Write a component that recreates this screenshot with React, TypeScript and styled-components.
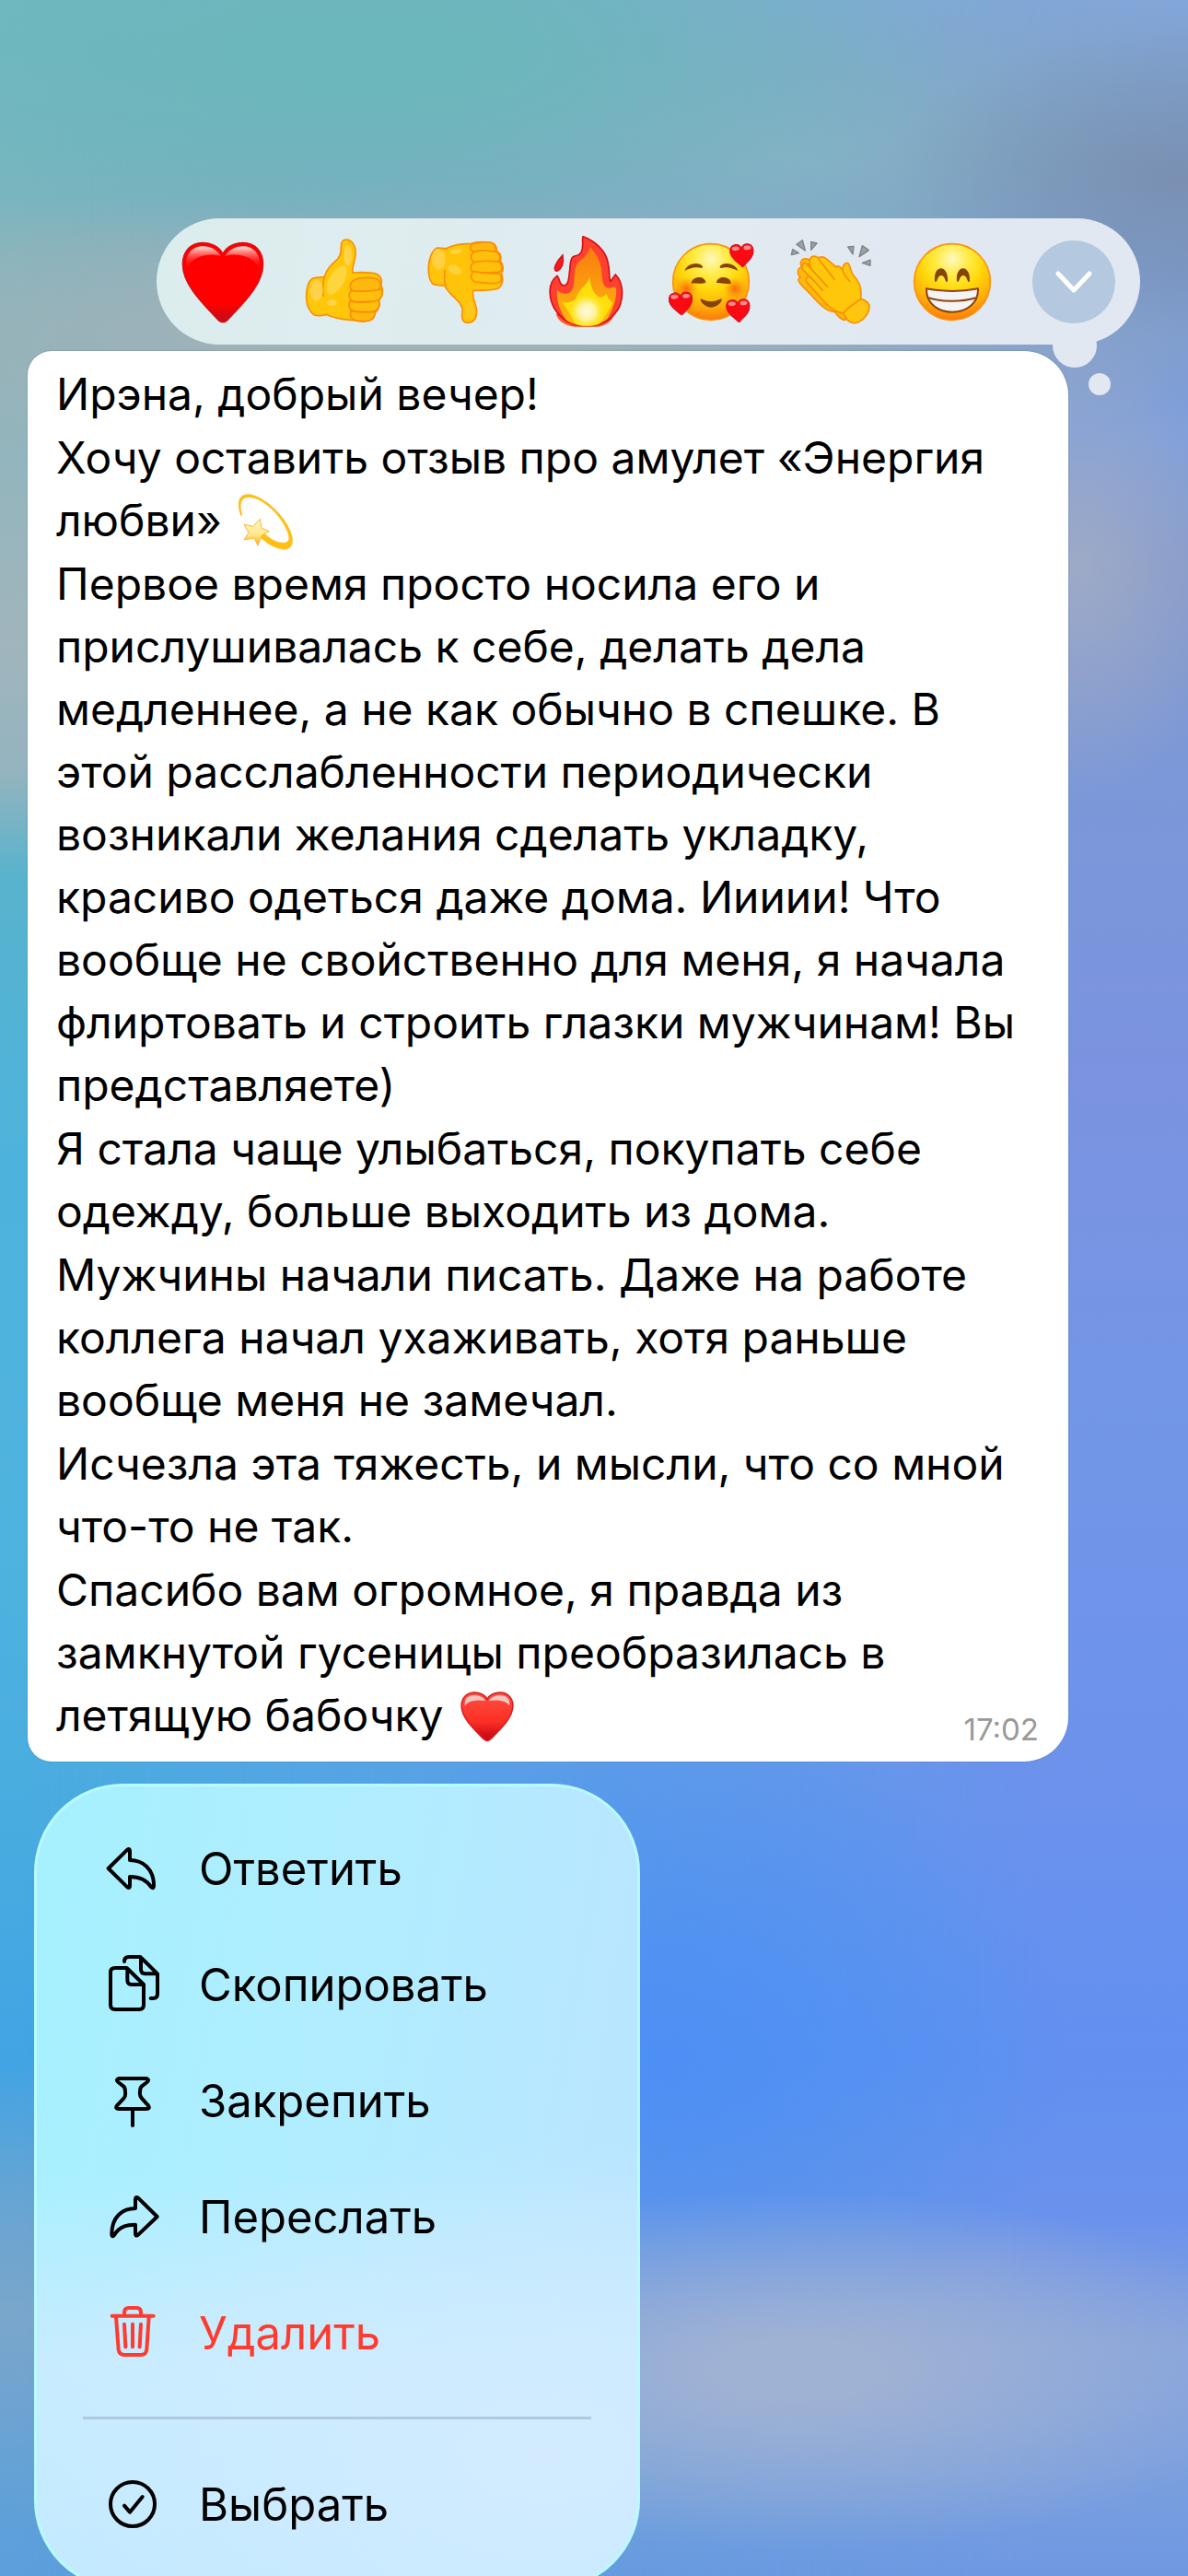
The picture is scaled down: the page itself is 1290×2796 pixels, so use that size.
import type { ReactNode } from "react";
import styled, { createGlobalStyle } from "styled-components";

const GlobalStyle = createGlobalStyle`
  * {
    box-sizing: border-box;
  }

  body {
    margin: 0;
    font-family: Inter, "Liberation Sans", sans-serif;
    color: #000000;
  }

  button {
    border: none;
    background: none;
    padding: 0;
    font: inherit;
    color: inherit;
    cursor: pointer;
  }
`;

const Screen = styled.main`
  position: relative;
  height: 100vh;
  overflow: hidden;
  display: flex;
  flex-direction: column;
  align-items: flex-start;
  padding-top: 237px;
  background: linear-gradient(
    to bottom,
    #70b8c4 0%,
    #7cb5bf 8%,
    #93b5bd 18%,
    #a0b5bd 25%,
    #94b4bf 30%,
    #58b3cd 34%,
    #4eb3dc 45%,
    #4fb3df 60%,
    #48abe0 72%,
    #42a4e4 80%,
    #6aa5d1 86%,
    #7aa6cb 90%,
    #5ea0da 98%,
    #5b9fdc 100%
  );
`;

/* Second colour column, faded in towards the right edge */
const WallpaperRight = styled.div`
  position: absolute;
  inset: 0;
  background: linear-gradient(
    to bottom,
    #82a6d8 0%,
    #7c98c4 6%,
    #7b9acf 12%,
    #7f9fdc 17%,
    #8499cc 22%,
    #7c98d8 30%,
    #7b93e0 42%,
    #7396e6 54%,
    #6d92ec 68%,
    #6290f1 80%,
    #6a92ec 86%,
    #86a3dd 91%,
    #7a9fdf 96%,
    #6f98e2 100%
  );
  mask-image: linear-gradient(to right, transparent 2%, #000000 88%);
`;

const WallpaperGlow = styled.div`
  position: absolute;
  inset: 0;
  background:
    radial-gradient(24% 6% at 99% 7%, rgba(120, 140, 174, 0.8), rgba(120, 140, 174, 0)),
    radial-gradient(50% 8% at 30% 2%, rgba(108, 183, 187, 1) 20%, rgba(108, 183, 187, 0)),
    radial-gradient(46% 7% at 66% 6%, rgba(134, 180, 198, 0.9), rgba(134, 180, 198, 0)),
    radial-gradient(13% 9% at 91% 22%, rgba(160, 172, 198, 0.9), rgba(160, 172, 198, 0)),
    radial-gradient(70% 6% at 36% 13%, rgba(160, 178, 184, 1) 20%, rgba(160, 178, 184, 0)),
    radial-gradient(42% 7% at 67% 92%, rgba(160, 178, 212, 1) 15%, rgba(160, 178, 212, 0)),
    radial-gradient(34% 14% at 56% 80%, rgba(76, 142, 245, 0.9), rgba(76, 142, 245, 0));
`;

const ReactionBar = styled.div`
  position: relative;
  z-index: 1;
  align-self: flex-end;
  flex-shrink: 0;
  display: flex;
  align-items: center;
  gap: 32px;
  height: 137px;
  margin-right: 52px;
  padding: 0 22px;
  border-radius: 69px;
  background: linear-gradient(100deg, #dcedee 0%, #e1ecf0 50%, #e1e8f1 75%, #e1e8f2 100%);
`;

const TailDot = styled.span<{ $size: number; $right: number; $top: number }>`
  position: absolute;
  top: ${(props) => props.$top}px;
  right: ${(props) => props.$right}px;
  width: ${(props) => props.$size}px;
  height: ${(props) => props.$size}px;
  border-radius: 50%;
  background: #e1e8f2;
`;

const ReactionButton = styled.button`
  width: 100px;
  height: 100px;

  svg {
    display: block;
    width: 100%;
    height: 100%;
  }
`;

const ExpandButton = styled.button`
  position: relative;
  display: flex;
  align-items: center;
  justify-content: center;
  width: 90px;
  height: 90px;
  margin: 0 5px;
  border-radius: 50%;
  background: #b4c9df;
`;

const Bubble = styled.article`
  position: relative;
  align-self: stretch;
  flex-shrink: 0;
  margin: 7px 130px 0 30px;
  padding: 13px 31px 15px;
  border-radius: 26px 48px 48px 26px;
  background: #ffffff;
  box-shadow: 0 0 2px rgba(40, 80, 120, 0.4);
`;

const Paragraph = styled.p`
  margin: 0 0 1px;
  font-size: 48px;
  line-height: 68px;
  white-space: nowrap;
`;

const Line = styled.span`
  display: block;
  height: 68px;
`;

const InlineEmoji = styled.svg`
  width: 64px;
  height: 64px;
  margin: -4px 0 -4px 2px;
  vertical-align: -12px;
`;

const Time = styled.time`
  position: absolute;
  right: 32px;
  bottom: 13px;
  font-size: 33px;
  line-height: 44px;
  color: #999999;
`;

const Menu = styled.nav`
  position: relative;
  flex-shrink: 0;
  width: 51%;
  margin: 24px 0 0 37px;
  padding: 26px 0;
  border: 3px solid #b8fbff;
  border-radius: 96px;
  background:
    radial-gradient(90% 40% at 85% 84%, rgba(212, 235, 255, 0.9), rgba(212, 235, 255, 0)),
    linear-gradient(to bottom, rgba(200, 236, 255, 0) 48%, #c8ecff 72%, #c2eaff 100%),
    linear-gradient(100deg, #a6f1ff 0%, #b0edff 45%, #b9e6ff 85%);
`;

const MenuItem = styled.button<{ $danger?: boolean }>`
  display: flex;
  align-items: center;
  gap: 36px;
  width: 100%;
  height: 126px;
  padding-left: 68px;
  font-size: 49px;
  color: ${(props) => (props.$danger ? "#ff3b30" : "#000000")};
`;

const MenuIcon = styled.svg`
  width: 72px;
  height: 72px;
  fill: none;
  stroke: currentColor;
  stroke-width: 12;
  stroke-linecap: round;
  stroke-linejoin: round;
`;

const Separator = styled.hr`
  height: 3px;
  margin: 28px 50px 29px;
  border: none;
  background: #b0c8e0;
`;

const HEART =
  "M159 76 C146 52 120 40 93 40 C54 40 28 70 28 110 C28 175 90 235 140 288 Q159 310 178 288 C228 235 290 175 290 110 C290 70 264 40 225 40 C198 40 172 52 159 76 Z";

const HeartEmoji = () => (
  <svg viewBox="9 18 300 300">
    <defs>
      <linearGradient id="heartShine" x1="0" y1="0" x2="0" y2="1">
        <stop offset="0" stopColor="#ffe9df" />
        <stop offset="1" stopColor="#ff0000" stopOpacity="0" />
      </linearGradient>
      <linearGradient id="heartBody" x1="0" y1="0" x2="0" y2="1">
        <stop offset="0.78" stopColor="#ff0000" />
        <stop offset="0.92" stopColor="#cf0a10" />
      </linearGradient>
    </defs>
    <path d={HEART} fill="url(#heartBody)" stroke="#d3101a" strokeWidth="4" />
    <path d="M42 128 C30 84 56 52 93 52 C122 52 142 66 152 84 C110 72 54 84 42 128 Z" fill="url(#heartShine)" />
    <path d="M276 128 C288 84 262 52 225 52 C196 52 176 66 166 84 C208 72 264 84 276 128 Z" fill="url(#heartShine)" />
  </svg>
);

const ThumbUpEmoji = () => (
  <svg viewBox="405 18 300 300">
    <g fill="#ffc709" stroke="#f98f06" strokeWidth="5" strokeLinejoin="round" strokeLinecap="round">
      <path d="M545 45 C547 28 566 27 578 37 C594 51 593 76 588 96 C585 112 579 124 582 138 C606 136 634 137 652 140 C672 145 680 160 674 178 C681 190 682 208 668 226 C671 246 668 258 655 268 C654 290 637 299 606 296 C572 290 530 293 497 274 C485 277 472 280 457 276 C440 264 431 242 431 216 C431 186 437 166 450 157 C462 152 476 155 490 151 C498 124 514 110 533 93 C548 76 542 62 545 45 Z" />
      <path d="M583 164 Q606 150 656 156 Q675 166 673 180 Q671 196 650 197 L594 200 Q572 196 574 180 Q575 170 583 164 Z" fill="#ffb90c" />
      <path d="M577 196 Q614 204 674 192 Q684 206 672 222 Q664 232 646 232 L590 233 Q569 228 570 212 Q571 202 577 196 Z" fill="#ffbf0a" />
      <path d="M574 230 Q610 240 668 228 Q672 246 663 256 Q654 266 640 266 L592 264 Q570 260 570 246 Q570 236 574 230 Z" fill="#ffbf0a" />
      <path d="M576 262 Q610 270 655 265 Q654 282 645 290 Q630 298 604 295 Q578 292 574 278 Z" fill="#ffb90c" />
      <path d="M490 152 Q482 184 486 214" fill="none" />
    </g>
    <ellipse cx="464" cy="196" rx="21" ry="34" fill="#ffd24a" />
    <ellipse cx="530" cy="162" rx="24" ry="52" transform="rotate(30 530 162)" fill="#ffd53f" />
    <ellipse cx="566" cy="82" rx="13" ry="34" fill="#ffd347" />
    <ellipse cx="514" cy="236" rx="16" ry="10" fill="#ffd347" />
  </svg>
);

const ThumbDownEmoji = () => (
  <svg viewBox="21 18 300 300">
    <g fill="#ffc409" stroke="#f98f06" strokeWidth="5" strokeLinejoin="round" strokeLinecap="round">
      <path d="M74 58 C88 56 100 61 110 58 C136 44 162 43 186 44 C206 36 246 36 262 44 C272 52 270 62 274 70 C286 76 286 92 283 100 C294 112 294 130 286 140 C294 158 290 178 278 188 C258 198 226 194 194 196 C190 216 200 232 205 254 C208 280 202 300 176 301 C158 300 156 284 159 266 C162 246 146 230 128 214 C112 198 106 190 102 180 C90 180 74 180 62 174 C42 150 44 80 74 58 Z" />
      <path d="M190 46 Q214 36 254 40 Q270 48 266 68 L198 70 Q184 66 184 58 Z" fill="#ffb90c" />
      <path d="M194 72 Q216 60 268 70 Q284 78 282 94 Q278 102 262 102 L200 104 Q186 98 187 84 Z" fill="#ffbf0a" />
      <path d="M194 106 Q222 96 276 102 Q292 112 288 128 Q282 138 264 137 L200 140 Q184 132 187 116 Z" fill="#ffbf0a" />
      <path d="M194 134 Q236 142 280 140 Q290 154 284 166 Q274 174 252 173 Q222 170 200 168 Q186 160 188 146 Z" fill="#ffc409" />
      <path d="M102 130 Q98 156 104 184" fill="none" />
    </g>
    <ellipse cx="82" cy="94" rx="22" ry="34" fill="#ffd043" />
    <ellipse cx="134" cy="128" rx="24" ry="14" transform="rotate(24 134 128)" fill="#ffd13b" />
    <ellipse cx="140" cy="68" rx="20" ry="9" transform="rotate(-14 140 68)" fill="#ffd13b" />
    <ellipse cx="182" cy="260" rx="13" ry="28" fill="#ffc61e" />
  </svg>
);

const FireEmoji = () => (
  <svg viewBox="417 18 300 300">
    <defs>
      <radialGradient id="fireCore">
        <stop offset="0" stopColor="#fffbe0" />
        <stop offset="0.5" stopColor="#fff39a" />
        <stop offset="1" stopColor="#ffe628" stopOpacity="0" />
      </radialGradient>
      <linearGradient id="fireMid" x1="0" y1="0" x2="0" y2="1">
        <stop offset="0" stopColor="#f97d10" />
        <stop offset="1" stopColor="#ffb80c" />
      </linearGradient>
    </defs>
    <path d="M464 272 Q474 306 524 314 H604 Q646 304 652 276 L630 262 L490 262 Z" fill="#ff5a2e" />
    <path
      d="M552 20 C590 34 628 66 634 108 C640 134 636 150 641 166 C648 162 652 150 658 144 C682 168 684 208 674 240 C668 262 652 276 640 288 C600 320 524 318 490 290 C464 270 446 238 445 208 C442 178 452 160 468 148 C478 156 472 178 490 180 C504 180 506 158 508 138 C512 112 508 96 520 86 C530 80 538 86 546 72 C556 52 548 38 552 20 Z"
      fill="#ff402f"
      stroke="#d7101a"
      strokeWidth="5"
    />
    <path d="M486 80 C490 102 486 122 470 132 C460 136 458 124 462 114 C468 100 476 90 486 80 Z" fill="#ef1c20" stroke="#d7101a" strokeWidth="4" />
    <path
      d="M574 54 C602 80 614 116 614 150 C616 172 620 186 636 188 C646 188 654 182 660 186 C664 220 648 262 634 284 C610 316 522 318 496 290 C478 262 464 232 468 194 C480 208 504 212 516 196 C530 172 518 138 532 112 C544 92 564 92 574 54 Z"
      fill="url(#fireMid)"
    />
    <path d="M574 152 C576 184 588 210 608 218 C620 216 624 212 630 208 C630 222 644 232 650 236 C634 264 618 290 604 306 Q564 318 528 306 C514 280 500 256 484 234 C500 238 520 234 530 220 C538 190 562 184 574 152 Z" fill="#ffdf0b" />
    <ellipse cx="564" cy="264" rx="58" ry="56" fill="url(#fireCore)" />
  </svg>
);

const SmallHeart = ({ x, y }: { x: number; y: number }) => (
  <g transform={`translate(${x} ${y}) rotate(-4)`}>
    <path
      d="M0 -22 C-8 -42 -38 -38 -38 -12 C-38 10 -14 24 -3 37 Q0 40 3 37 C16 24 38 10 38 -12 C38 -38 8 -42 0 -22 Z"
      fill="#fb0a14"
      stroke="#d01322"
      strokeWidth="3"
    />
    <ellipse cx="-19" cy="-22" rx="12" ry="7" fill="#ff8a8a" />
    <ellipse cx="19" cy="-22" rx="12" ry="7" fill="#ff8a8a" />
  </g>
);

const FaceGradient = ({ id }: { id: string }) => (
  <radialGradient id={id} cx="0.5" cy="0.2" r="0.82">
    <stop offset="0" stopColor="#fff8c0" />
    <stop offset="0.25" stopColor="#ffec4a" />
    <stop offset="0.5" stopColor="#ffd80a" />
    <stop offset="0.78" stopColor="#ffab0c" />
    <stop offset="1" stopColor="#fb7208" />
  </radialGradient>
);

const LoveFaceEmoji = () => (
  <svg viewBox="12 18 300 300">
    <defs>
      <FaceGradient id="loveFace" />
      <radialGradient id="blush">
        <stop offset="0" stopColor="#fb6a0a" />
        <stop offset="1" stopColor="#fb8a0a" stopOpacity="0" />
      </radialGradient>
    </defs>
    <circle cx="168" cy="168" r="124" fill="url(#loveFace)" stroke="#fb930c" strokeWidth="5" />
    <circle cx="88" cy="190" r="38" fill="url(#blush)" />
    <circle cx="246" cy="190" r="38" fill="url(#blush)" />
    <g fill="#874208">
      <path d="M82 132 C90 108 128 100 141 118 C142 126 134 122 126 121 C106 120 96 126 82 132 Z" />
      <path d="M256 132 C248 108 210 100 197 118 C196 126 204 122 212 121 C232 120 242 126 256 132 Z" />
      <path d="M104 173 C106 147 150 147 151 170 C144 175 112 172 104 173 Z" />
      <path d="M186 170 C188 147 232 147 233 173 C226 175 194 172 186 170 Z" />
      <path d="M133 224 C140 222 150 232 168 232 C186 232 196 222 204 224 C202 238 184 250 168 251 C152 250 136 238 133 224 Z" />
    </g>
    <SmallHeart x={269} y={80} />
    <SmallHeart x={70} y={237} />
    <SmallHeart x={257} y={260} />
  </svg>
);

const ClapEmoji = () => (
  <svg viewBox="408 18 300 300">
    <g fill="#9da1a4" stroke="#7f8386" strokeWidth="4" strokeLinejoin="round">
      <path d="M434 62 L454 74 L430 80 Z" />
      <path d="M466 32 L475 66 L447 46 Z" />
      <path d="M494 37 L513 42 L494 64 Z" />
      <path d="M614 54 L633 52 L630 78 Z" />
      <path d="M661 50 L682 65 L651 86 Z" />
      <path d="M687 96 L687 115 L661 106 Z" />
    </g>
    <g fill="#ffb90c" stroke="#f98f06" strokeWidth="5" strokeLinejoin="round" strokeLinecap="round">
      <path d="M464 98 C468 90 480 92 492 96 L600 240 L606 292 C590 292 580 278 572 266 C540 262 520 238 496 212 C480 194 462 182 453 164 C452 158 456 154 460 154 C448 144 448 122 464 120 C458 112 460 102 464 98 Z" />
      <path
        d="M492 92 C496 82 510 82 518 90 C528 84 538 86 546 94 L576 120 C584 110 594 126 596 128 C598 114 602 106 612 106 C622 110 622 130 630 144 C650 166 660 184 656 224 C672 226 680 236 684 244 C686 268 664 298 636 302 C616 302 606 286 600 270 C572 268 558 252 540 236 L478 166 C476 156 482 150 490 152 L466 126 C462 112 470 104 480 108 L492 118 C488 106 488 98 492 92 Z"
        fill="#ffc709"
      />
      <path d="M482 112 L548 184 M492 152 L532 196 M518 92 L570 160" fill="none" />
      <path d="M656 224 C640 236 610 252 600 270" fill="none" />
      <path d="M596 128 C600 146 612 156 620 166" fill="none" />
    </g>
    <ellipse cx="654" cy="254" rx="20" ry="12" transform="rotate(-46 654 254)" fill="#ffc31c" />
  </svg>
);

const GrinEmoji = () => (
  <svg viewBox="0 0 300 300">
    <defs>
      <FaceGradient id="grinFace" />
    </defs>
    <circle cx="150" cy="150" r="124" fill="url(#grinFace)" stroke="#fb930c" strokeWidth="5" />
    <g fill="#874208">
      <path d="M93 146 C88 92 138 92 135 146 C132 156 128 146 125 138 C120 126 108 126 103 138 C100 146 96 156 93 146 Z" />
      <path d="M165 146 C160 92 210 92 207 146 C204 156 200 146 197 138 C192 126 180 126 175 138 C172 146 168 156 165 146 Z" />
    </g>
    <path
      d="M66 172 C120 182 180 182 234 172 C236 220 196 248 150 248 C104 248 64 220 66 172 Z"
      fill="#f4f4f6"
      stroke="#8c420c"
      strokeWidth="6"
      strokeLinejoin="round"
    />
    <path d="M73 202 C120 216 180 216 227 202" fill="none" stroke="#8c420c" strokeWidth="6" />
  </svg>
);

const DizzyEmoji = () => (
  <InlineEmoji viewBox="0 0 192 192" role="img" aria-label="Головокружение">
    <defs>
      <linearGradient id="starFill" x1="0" y1="0" x2="0" y2="1">
        <stop offset="0" stopColor="#fff8c2" />
        <stop offset="0.6" stopColor="#ffe88a" />
        <stop offset="1" stopColor="#ffa60c" />
      </linearGradient>
    </defs>
    <path
      d="M17 76 C-2 24 18 -2 60 12 C118 32 178 104 184 152 C186 180 170 192 142 184 C118 178 98 164 82 148 L92 134 C110 152 130 164 150 166 C170 168 178 158 172 138 C158 90 104 30 56 18 C20 10 8 30 20 76 Z"
      fill="#ffc012"
      stroke="#ffb20a"
      strokeWidth="2"
    />
    <path
      d="M79 88 L84 118 L109 128 L86 140 L72 174 L60 150 L27 156 L42 132 L27 106 L56 112 Z"
      fill="url(#starFill)"
      stroke="#fcb53a"
      strokeWidth="3"
      strokeLinejoin="round"
    />
  </InlineEmoji>
);

const TextHeart = () => (
  <InlineEmoji viewBox="9 10 300 316" preserveAspectRatio="none" role="img" aria-label="Сердце">
    <defs>
      <linearGradient id="textHeart" x1="0" y1="0" x2="0" y2="1">
        <stop offset="0.1" stopColor="#ff4a3c" />
        <stop offset="0.6" stopColor="#fb2f24" />
        <stop offset="0.9" stopColor="#d20c14" />
      </linearGradient>
    </defs>
    <path d={HEART} fill="url(#textHeart)" stroke="#d81a20" strokeWidth="7" />
    <path d="M46 110 C40 72 64 54 93 54 C122 54 140 66 150 84 C110 78 66 80 46 110 Z" fill="#f2c4c0" />
    <path d="M272 110 C278 72 254 54 225 54 C196 54 178 66 168 84 C208 78 252 80 272 110 Z" fill="#f2c4c0" />
  </InlineEmoji>
);

const reactions = [
  { label: "Сердце", icon: <HeartEmoji /> },
  { label: "Нравится", icon: <ThumbUpEmoji /> },
  { label: "Не нравится", icon: <ThumbDownEmoji /> },
  { label: "Огонь", icon: <FireEmoji /> },
  { label: "Обожаю", icon: <LoveFaceEmoji /> },
  { label: "Аплодисменты", icon: <ClapEmoji /> },
  { label: "Улыбка", icon: <GrinEmoji /> },
];

const message: ReactNode[][] = [
  ["Ирэна, добрый вечер!"],
  [
    "Хочу оставить отзыв про амулет «Энергия",
    <>
      любви» <DizzyEmoji />
    </>,
  ],
  [
    "Первое время просто носила его и",
    "прислушивалась к себе, делать дела",
    "медленнее, а не как обычно в спешке. В",
    "этой расслабленности периодически",
    "возникали желания сделать укладку,",
    "красиво одеться даже дома. Иииии! Что",
    "вообще не свойственно для меня, я начала",
    "флиртовать и строить глазки мужчинам! Вы",
    "представляете)",
  ],
  ["Я стала чаще улыбаться, покупать себе", "одежду, больше выходить из дома."],
  [
    "Мужчины начали писать. Даже на работе",
    "коллега начал ухаживать, хотя раньше",
    "вообще меня не замечал.",
  ],
  ["Исчезла эта тяжесть, и мысли, что со мной", "что-то не так."],
  [
    "Спасибо вам огромное, я правда из",
    "замкнутой гусеницы преобразилась в",
    <>
      летящую бабочку <TextHeart />
    </>,
  ],
];

const actions = [
  {
    label: "Ответить",
    viewBox: "54 36 216 216",
    path: "M83 144 L145 83 Q153 77 153 88 V117 C195 117 231 145 231 200 Q231 212 223 205 C205 178 180 171 153 171 V200 Q153 211 145 205 Z",
  },
  {
    label: "Скопировать",
    viewBox: "54 414 216 216",
    path: "M143 468 H105 Q90 468 90 482 V588 Q90 603 105 603 H184 Q198 603 198 588 V522 Z M145 470 V508 Q145 522 158 522 H198 M135 447 Q135 432 150 432 H187 L243 487 V553 Q243 567 229 567 H221 M189 434 V472 Q189 487 203 487 H242",
  },
  {
    label: "Закрепить",
    viewBox: "54 792 216 216",
    path: "M116 828 H208 Q218 832 209 840 L192 853 Q186 858 186 872 Q184 884 192 893 L213 916 Q220 927 207 927 H117 Q104 927 111 916 L133 893 Q140 886 138 872 Q138 858 132 853 L115 840 Q106 832 116 828 Z M162 927 V981",
  },
  {
    label: "Переслать",
    viewBox: "54 90 216 216",
    path: "M242 198 L180 137 Q171 131 171 141 V171 C130 171 94 197 94 255 Q95 267 102 258 C120 228 145 224 171 224 V252 Q171 264 180 257 Z",
  },
  {
    label: "Удалить",
    viewBox: "54 468 216 216",
    danger: true,
    path: "M95 521 H230 M135 518 V510 Q135 495 150 495 H175 Q189 495 189 510 V518 M108 524 L116 630 Q118 648 136 648 H188 Q207 648 208 630 L215 524 M135 548 L139 622 M162 548 V622 M189 548 L185 622",
  },
];

export default function App() {
  return (
    <>
      <GlobalStyle />
      <Screen>
        <WallpaperRight />
        <WallpaperGlow />
        <ReactionBar>
          <TailDot $size={48} $right={47} $top={114} />
          <TailDot $size={24} $right={32} $top={168} />
          {reactions.map((reaction) => (
            <ReactionButton key={reaction.label} type="button" aria-label={reaction.label}>
              {reaction.icon}
            </ReactionButton>
          ))}
          <ExpandButton type="button" aria-label="Ещё реакции">
            <svg width="40" height="24" viewBox="0 0 40 24" fill="none" stroke="#ffffff" strokeWidth="5" strokeLinecap="round" strokeLinejoin="round">
              <path d="M3 3 L20 21 L37 3" />
            </svg>
          </ExpandButton>
        </ReactionBar>
        <Bubble>
          {message.map((lines, i) => (
            <Paragraph key={i}>
              {lines.map((line, j) => (
                <Line key={j}>{line}</Line>
              ))}
            </Paragraph>
          ))}
          <Time>17:02</Time>
        </Bubble>
        <Menu>
          {actions.map((action) => (
            <MenuItem key={action.label} type="button" $danger={action.danger}>
              <MenuIcon viewBox={action.viewBox}>
                <path d={action.path} />
              </MenuIcon>
              {action.label}
            </MenuItem>
          ))}
          <Separator />
          <MenuItem type="button">
            <MenuIcon viewBox="54 1026 216 216">
              <circle cx="162" cy="1134" r="72" />
              <path d="M135 1139 L153 1160 L194 1110" />
            </MenuIcon>
            Выбрать
          </MenuItem>
        </Menu>
      </Screen>
    </>
  );
}
